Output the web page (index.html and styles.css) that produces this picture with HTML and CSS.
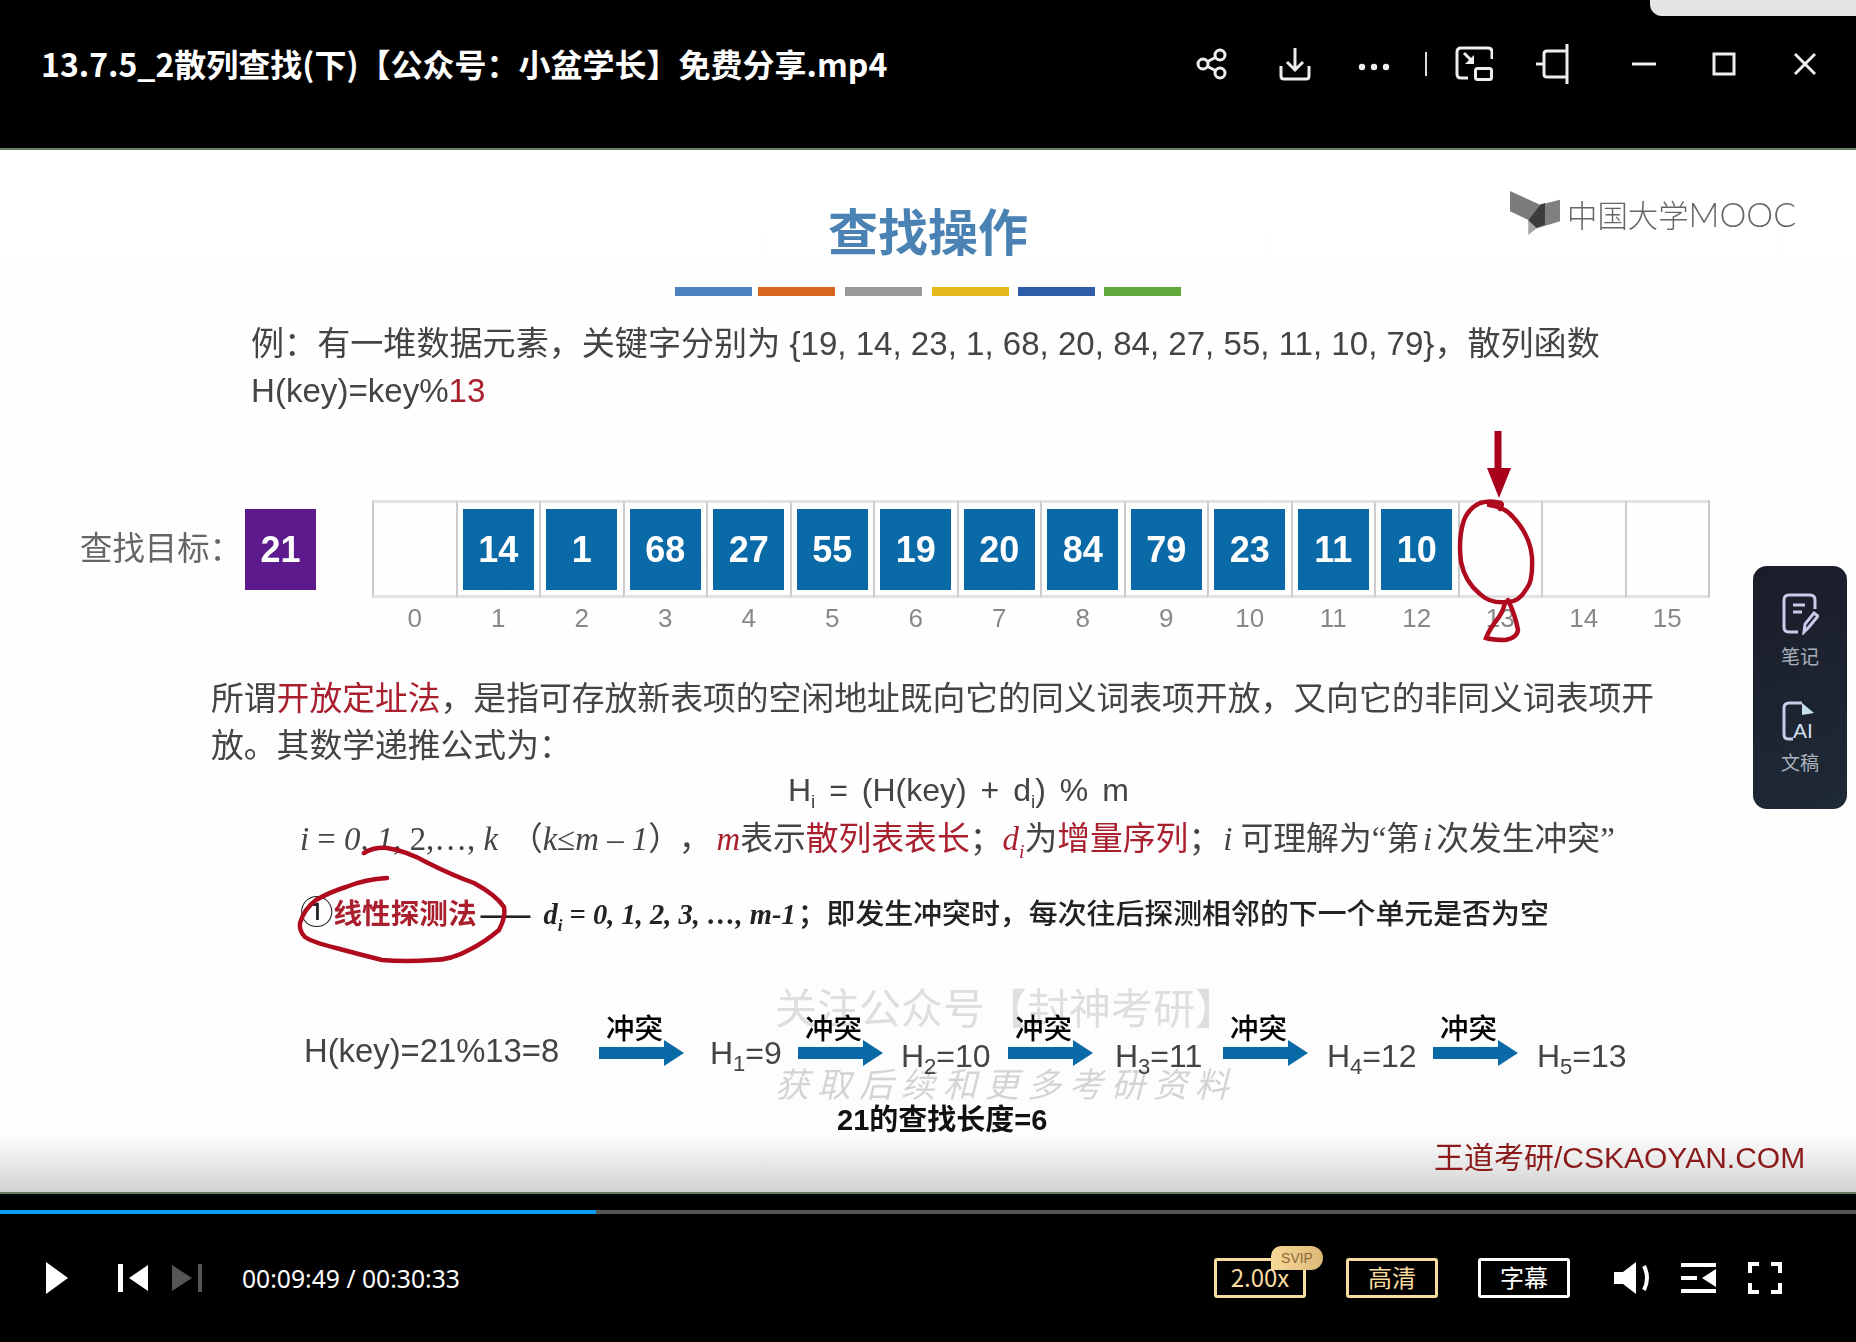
FILE: index.html
```html
<!DOCTYPE html>
<html lang="zh-CN">
<head>
    <meta charset="UTF-8">
    <meta name="viewport" content="width=device-width, initial-scale=1.0">
    <title>13.7.5_2散列查找(下)</title>
    <link rel="stylesheet" href="styles.css">
</head>
<body>
<div class="player">
    <div class="corner-tab"></div>

    <!-- Title bar -->
    <header class="topbar">
        <div class="file-title">13.7.5_2散列查找(下)【公众号：小盆学长】免费分享.mp4</div>
        <div class="window-tools">
            <svg class="tool share" viewBox="0 0 32 32"><circle cx="7" cy="16" r="5"/><circle cx="24" cy="7" r="5"/><circle cx="24" cy="25" r="5"/><path d="M11.5 13.5l8-4M11.5 18.5l8 4"/></svg>
            <svg class="tool download" viewBox="0 0 32 34"><path d="M16 1v22M8 15l8 8 8-8M2 19v10q0 3 3 3h22q3 0 3-3V19"/></svg>
            <svg class="tool dots" viewBox="0 0 32 8"><circle class="solid" cx="4" cy="4" r="3.2"/><circle class="solid" cx="16" cy="4" r="3.2"/><circle class="solid" cx="28" cy="4" r="3.2"/></svg>
            <span class="tool-sep"></span>
            <svg class="tool mini" viewBox="0 0 38 36"><path d="M13 32H6Q2 32 2 28V6Q2 2 6 2H33Q37 2 37 6v7"/><rect x="20.5" y="22.5" width="16" height="11" rx="2"/><path d="M9 7l8 8"/><path class="solid" d="M19 9v9h-9z"/></svg>
            <svg class="tool pin" viewBox="0 0 34 40"><path d="M32 0v40M32 7H12q-3 0-3 3v20q0 3 3 3h20M9 20H1"/></svg>
            <svg class="tool win-min" viewBox="0 0 24 4"><path d="M0 2h24"/></svg>
            <svg class="tool win-max" viewBox="0 0 24 24"><rect x="2" y="2" width="20" height="20"/></svg>
            <svg class="tool win-close" viewBox="0 0 24 24"><path d="M2 2l20 20M22 2L2 22"/></svg>
        </div>
    </header>

    <!-- Video frame -->
    <main class="slide">
        <div class="mooc-logo">
            <svg class="mooc-book" viewBox="0 0 52 48"><path fill="#7b7b7b" d="M0 1l30 13.700L18.300 30 0 21.300z"/><path fill="#808080" d="M30 14.700l20-5v21.600L18.300 41z"/><path fill="#3c3c3c" d="M30 14.700l5-1.700v21.700l-15 5-1.700-10z"/><path fill="#a5a5a5" d="M18.300 30v15l8.400-6.700z"/></svg>
            <span class="mooc-cn">中国大学</span><span class="mooc-en">MOOC</span>
        </div>

        <h1 class="slide-title">查找操作</h1>
        <div class="color-bars">
            <i class="bar-blue"></i><i class="bar-orange"></i><i class="bar-grey"></i><i class="bar-yellow"></i><i class="bar-navy"></i><i class="bar-green"></i>
        </div>

        <p class="example">例：有一堆数据元素，关键字分别为 {19, 14, 23, 1, 68, 20, 84, 27, 55, 11, 10, 79}，散列函数<br>H(key)=key%<span class="red">13</span></p>

        <div class="lookup">
            <div class="lookup-label">查找目标：</div>
            <div class="target">21</div>
            <div class="slots">
                <div class="col"><div class="slot"></div><div class="idx">0</div></div>
                <div class="col"><div class="slot"><b>14</b></div><div class="idx">1</div></div>
                <div class="col"><div class="slot"><b>1</b></div><div class="idx">2</div></div>
                <div class="col"><div class="slot"><b>68</b></div><div class="idx">3</div></div>
                <div class="col"><div class="slot"><b>27</b></div><div class="idx">4</div></div>
                <div class="col"><div class="slot"><b>55</b></div><div class="idx">5</div></div>
                <div class="col"><div class="slot"><b>19</b></div><div class="idx">6</div></div>
                <div class="col"><div class="slot"><b>20</b></div><div class="idx">7</div></div>
                <div class="col"><div class="slot"><b>84</b></div><div class="idx">8</div></div>
                <div class="col"><div class="slot"><b>79</b></div><div class="idx">9</div></div>
                <div class="col"><div class="slot"><b>23</b></div><div class="idx">10</div></div>
                <div class="col"><div class="slot"><b>11</b></div><div class="idx">11</div></div>
                <div class="col"><div class="slot"><b>10</b></div><div class="idx">12</div></div>
                <div class="col"><div class="slot"></div><div class="idx">13</div></div>
                <div class="col"><div class="slot"></div><div class="idx">14</div></div>
                <div class="col"><div class="slot"></div><div class="idx">15</div></div>
            </div>
        </div>

        <p class="definition">所谓<span class="red">开放定址法</span>，是指可存放新表项的空闲地址既向它的同义词表项开放，又向它的非同义词表项开<br>放。其数学递推公式为：</p>

        <div class="formula">H<sub>i</sub> = (H(key) + d<sub>i</sub>) % m</div>

        <div class="math-line"><em>i</em> = <em>0, 1,</em> 2,…, <em>k</em><span class="paren">（<em>k</em>≤<em>m</em> – <em>1</em>）</span>，<em class="red m-var">m</em>表示<span class="red">散列表表长</span>；<em class="red">d<sub>i</sub></em>为<span class="red">增量序列</span>；<em class="i-var">i</em> 可理解为“第<em class="nth">i</em>次发生冲突”</div>

        <div class="probe-line"><span class="circled">①</span><strong class="red">线性探测法</strong><span class="dash">——</span><em class="probe-math">d<sub>i</sub> = 0, 1, 2, 3, …, m-1</em><span class="probe-text">；即发生冲突时，每次往后探测相邻的下一个单元是否为空</span></div>

        <div class="chain">
            <div class="h-key">H(key)=21%13=8</div>
            <div class="hop"><span>冲突</span><svg viewBox="0 0 85 26"><path d="M0 7h65V0l20 13-20 13v-7H0z"/></svg></div>
            <div class="h-val v1">H<sub>1</sub>=9</div>
            <div class="hop"><span>冲突</span><svg viewBox="0 0 85 26"><path d="M0 7h65V0l20 13-20 13v-7H0z"/></svg></div>
            <div class="h-val v2">H<sub>2</sub>=10</div>
            <div class="hop"><span>冲突</span><svg viewBox="0 0 85 26"><path d="M0 7h65V0l20 13-20 13v-7H0z"/></svg></div>
            <div class="h-val v3">H<sub>3</sub>=11</div>
            <div class="hop"><span>冲突</span><svg viewBox="0 0 85 26"><path d="M0 7h65V0l20 13-20 13v-7H0z"/></svg></div>
            <div class="h-val v4">H<sub>4</sub>=12</div>
            <div class="hop"><span>冲突</span><svg viewBox="0 0 85 26"><path d="M0 7h65V0l20 13-20 13v-7H0z"/></svg></div>
            <div class="h-val v5">H<sub>5</sub>=13</div>
        </div>

        <div class="search-len">21的查找长度=6</div>
        <div class="site-mark">王道考研/CSKAOYAN.COM</div>

        <!-- burned-in watermark -->
        <div class="wm wm-top">关注公众号【封神考研】</div>
        <div class="wm wm-bottom">获取后续和更多考研资料</div>

        <!-- pen marks drawn over the slide, in page coordinates -->
        <svg class="ink" viewBox="0 150 1856 1042">
            <path class="arrow-shaft" d="M1498 431v40"/>
            <path class="arrow-head" d="M1487 468h24l-12 30z"/>
            <path d="M1489 505q16 2 24 12 17 18 19 40 1 24-5 31-8 14-19 14-18 2-28-8-15-12-19-32-3-24 3-42 5-12 16-17 10-3 21 0 2 2-1 6"/>
            <path d="M1508 600q7 14 10 30-1 8-13 10-12 0-19-2 4-10 13-21 5-8 6-15"/>
            <path d="M364 853q10-6 23-5 20 3 41 15 26 13 46 20 22 12 30 24 2 10-5 23-14 12-30 20-18 10-36 10-28 2-51 0-24-6-46-12-24-6-31-11-6-6-5-14 4-14 16-23 14-8 30-13 20-8 41-9"/>
        </svg>
    </main>

    <!-- Side panel -->
    <aside class="side-panel">
        <div class="side-item">
            <svg viewBox="0 0 38 44"><path d="M17 41H8Q3 41 3 36V9Q3 4 8 4H29Q34 4 34 9v9"/><path d="M12 14h12M12 21h9"/><path d="M23 41l1-8 9-11 4 3-9 11z"/></svg>
            <span>笔记</span>
        </div>
        <div class="side-item">
            <svg viewBox="0 0 38 44"><path d="M12 42H7Q3 42 3 37V11Q3 6 8 6H21"/><path class="fold" d="M21 6l12 10-12 2z"/><text x="12" y="41">AI</text></svg>
            <span>文稿</span>
        </div>
    </aside>

    <!-- Player controls -->
    <footer class="controls">
        <div class="progress"><div class="progress-fill"></div></div>
        <div class="control-row">
            <svg class="ctl play" viewBox="0 0 22 32"><path d="M0 0l22 16L0 32z"/></svg>
            <svg class="ctl prev" viewBox="0 0 30 28"><path d="M0 0h5v28H0zM30 1v26L11 14z"/></svg>
            <svg class="ctl next" viewBox="0 0 30 28"><path d="M30 0h-4v28h4zM0 1v26l20-13z"/></svg>
            <div class="time">00:09:49 / 00:30:33</div>
            <div class="control-right">
                <div class="pill gold speed">2.00x<span class="svip">SVIP</span></div>
                <div class="pill gold">高清</div>
                <div class="pill subs">字幕</div>
                <svg class="ctl volume" viewBox="0 0 38 32"><path d="M0 10h9L22 0v32L9 22H0z"/><path class="line" d="M30 4q6 12 0 24"/></svg>
                <svg class="ctl playlist" viewBox="0 0 35 30"><path d="M0 0h35v4H0zM0 26h35v4H0zM0 13h16v4H0zM35 6v18L21 15z"/></svg>
                <svg class="ctl fullscreen" viewBox="0 0 34 32"><path class="line" d="M2 11V2h9M23 2h9v9M32 21v9h-9M11 30H2v-9"/></svg>
            </div>
        </div>
    </footer>
</div>
</body>
</html>
```

FILE: styles.css
```css
/* Page */
body {
    margin: 0;
    background-color: #000;
    font-family: "Liberation Sans", "Noto Sans CJK SC", sans-serif;
}

.player {
    position: relative;
    width: 1856px;
    height: 1342px;
    overflow: hidden;
    background-color: #000;
}

.corner-tab {
    position: absolute;
    top: 0;
    right: 0;
    width: 206px;
    height: 16px;
    background-color: #e4e4e4;
    border-bottom-left-radius: 12px;
}

/* Title bar */
.topbar {
    display: flex;
    align-items: center;
    justify-content: space-between;
    height: 128px;
    padding: 0 0 20px 41px;
    box-sizing: content-box;
    border-bottom: 2px solid #64805f;
}

.file-title {
    margin-top: -3px;
    color: #fff;
    font-family: "Noto Sans CJK SC", sans-serif;
    font-size: 32px;
    font-weight: 700;
}

.window-tools {
    display: flex;
    align-items: center;
}

.tool {
    fill: none;
    stroke: #eee;
    stroke-width: 3;
}

.tool .solid {
    fill: #eee;
    stroke: none;
}

.tool.share { width: 32px; height: 32px; margin-right: 51px; }
.tool.download { width: 32px; height: 34px; margin-right: 47px; }
.tool.dots { width: 32px; height: 8px; margin: 6px 0 0; }
.tool-sep { width: 2px; height: 24px; margin: 0 28px 0 35px; background-color: #ddd; }
.tool.mini { width: 38px; height: 36px; margin-right: 42px; }
.tool.pin { width: 34px; height: 40px; margin-right: 63px; }
.tool.win-min { width: 24px; height: 4px; margin-right: 56px; }
.tool.win-max { width: 24px; height: 24px; margin-right: 57px; }
.tool.win-close { width: 24px; height: 24px; margin-right: 39px; }

/* Video frame */
.slide {
    position: relative;
    height: 1042px;
    overflow: hidden;
    color: #444;
    background: linear-gradient(to bottom, #fff 0, #fdfdfd 985px, #d2d2d2 1042px);
    filter: blur(0.5px);
}

.red { color: #a91f2e; }

.mooc-logo {
    position: absolute;
    top: 40px;
    left: 1510px;
    display: flex;
    align-items: center;
    color: #666;
}

.mooc-book { width: 52px; height: 48px; margin-right: 5px; }

.mooc-cn {
    font-family: "Noto Sans CJK SC", sans-serif;
    font-size: 30.4px;
    font-weight: 300;
    line-height: 44px;
}

.mooc-en {
    font-family: Lato, sans-serif;
    font-size: 34px;
    font-weight: 300;
    line-height: 44px;
}

.slide-title {
    margin: 0;
    padding-top: 46px;
    text-align: center;
    color: #4a82b4;
    font-family: "Noto Sans CJK SC", sans-serif;
    font-size: 50px;
    line-height: 66px;
    font-weight: 700;
}

.color-bars {
    display: flex;
    margin: 25px 0 0 675px;
}

.color-bars i {
    display: block;
    width: 77px;
    height: 9px;
    margin-right: 9px;
}

.color-bars .bar-blue { margin-right: 6px; }
.color-bars .bar-orange, .color-bars .bar-grey { margin-right: 10px; }

.bar-blue { background-color: #4a82bd; }
.bar-orange { background-color: #d9661f; }
.bar-grey { background-color: #999; }
.bar-yellow { background-color: #e6b81e; }
.bar-navy { background-color: #2f5ca8; }
.bar-green { background-color: #5fa83a; }

.example {
    margin: 24px 0 0 251px;
    font-size: 33.1px;
    line-height: 47px;
}

/* Lookup row */
.lookup {
    display: flex;
    align-items: flex-start;
    margin: 86px 0 0 80px;
}

.lookup-label {
    width: 165px;
    color: #666;
    font-size: 32.4px;
    line-height: 98px;
    white-space: nowrap;
}

.target {
    width: 71px;
    height: 81px;
    margin: 9px 56px 0 0;
    color: #fff;
    background-color: #5c1a8c;
    font-size: 36px;
    font-weight: 700;
    line-height: 81px;
    text-align: center;
}

.slots {
    display: grid;
    grid-template-columns: repeat(16, 83.5px);
    border-right: 2px solid #ccc;
    height: 98px;
}

.slot {
    display: flex;
    align-items: center;
    justify-content: center;
    height: 98px;
    box-sizing: border-box;
    border: 3px solid #e2e2e2;
    border-width: 3px 0;
    border-left: 2px solid #ccc;
}

.slot b {
    display: block;
    width: 71px;
    height: 81px;
    color: #fff;
    background-color: #0a6aa8;
    font-size: 36px;
    line-height: 81px;
    text-align: center;
}

.idx {
    margin-top: 4px;
    padding-left: 2px;
    color: #888;
    font-size: 26px;
    line-height: 32px;
    text-align: center;
}

/* Text block */
.definition {
    margin: 77px 0 0 211px;
    font-size: 32.8px;
    line-height: 47px;
}

.formula {
    margin: -2px 0 0 788px;
    font-size: 32px;
    line-height: 46px;
    word-spacing: 5px;
}

sub {
    font-size: 60%;
    line-height: 0;
}

.math-line {
    margin: 3px 0 0 300px;
    font-family: "Liberation Serif", "Noto Sans CJK SC", serif;
    font-size: 32.8px;
    line-height: 47px;
    white-space: nowrap;
}

.paren { margin: 0 14px 0 12px; }
.m-var { margin-left: 5px; }
.i-var { margin-left: 2px; }
.nth { margin: 0 4px; }

.probe-line {
    margin: 26px 0 0 300px;
    color: #222;
    font-size: 29px;
    line-height: 44px;
    white-space: nowrap;
}

.circled { font-size: 33.5px; line-height: 30px; }
.probe-line .red { font-weight: 700; font-size: 28.6px; }
.dash { margin: 0 15px 0 4px; letter-spacing: -2px; font-size: 26px; font-weight: 700; }

.probe-math {
    font-family: "Liberation Serif", serif;
    font-weight: 700;
    font-size: 28.5px;
}

.probe-text {
    margin-left: 2px;
    font-family: "Noto Sans CJK SC", sans-serif;
    font-weight: 500;
    font-size: 28.9px;
}

/* Collision chain */
.chain {
    display: flex;
    align-items: flex-start;
    height: 94px;
    margin: 52px 0 0 304px;
    color: #444;
    font-size: 32px;
    white-space: nowrap;
}

.h-key { width: 295px; margin-top: 40px; font-size: 32.8px; line-height: 44px; }

.hop {
    display: flex;
    flex-direction: column;
    align-items: center;
    width: 85px;
    padding-top: 25px;
}

.hop span {
    margin-right: 14px;
    color: #000;
    font-size: 28.5px;
    font-weight: 500;
    line-height: 30px;
}

.hop svg { width: 85px; height: 26px; margin-top: -4px; fill: #0a6aa8; }

.h-val { margin-top: 45px; line-height: 44px; }
.h-val sub { font-size: 22px; }
.v1 { width: 88px; margin-left: 26px; margin-top: 42px; }
.v2 { width: 107px; margin-left: 18px; }
.v3 { width: 108px; margin-left: 22px; }
.v4 { width: 106px; margin-left: 19px; }
.v5 { margin-left: 19px; }

.search-len {
    margin: 17px 0 0 837px;
    color: #111;
    font-size: 29px;
    font-weight: 700;
    line-height: 40px;
}

.site-mark {
    margin: -1px 0 0 1434px;
    color: #8b1a1a;
    font-size: 30px;
    line-height: 38px;
}

.wm {
    position: absolute;
    white-space: nowrap;
    color: #e0e0e0;
    font-family: "Noto Sans CJK SC", sans-serif;
    mix-blend-mode: multiply;
}

.wm-top { top: 828px; left: 775px; font-size: 42px; line-height: 56px; }
.wm-bottom { top: 911px; left: 775px; color: #d6d6d6; font-size: 34px; font-style: italic; line-height: 44px; letter-spacing: 8px; }

.ink {
    position: absolute;
    top: 0;
    left: 0;
    width: 1856px;
    height: 1042px;
    fill: none;
    stroke: #b00a1e;
    stroke-width: 4.5;
    stroke-linecap: round;
}

.ink .arrow-shaft { stroke: #a8001c; stroke-width: 7; stroke-linecap: butt; }
.ink .arrow-head { fill: #a8001c; stroke: none; }

/* Side panel */
.side-panel {
    position: absolute;
    top: 566px;
    left: 1753px;
    display: flex;
    flex-direction: column;
    align-items: center;
    gap: 27px;
    width: 94px;
    height: 243px;
    box-sizing: border-box;
    padding-top: 25px;
    border-radius: 14px;
    background: linear-gradient(160deg, #1b1c2a, #1e2a36);
}

.side-item {
    display: flex;
    flex-direction: column;
    align-items: center;
    gap: 7px;
    color: #aab0bc;
    font-family: "Noto Sans CJK SC", sans-serif;
    font-size: 19px;
    line-height: 28px;
}

.side-item svg {
    width: 38px;
    height: 44px;
    fill: none;
    stroke: #c9cbe8;
    stroke-width: 3;
}

.side-item .fold { fill: #c5e0ea; stroke: none; }

.side-item text {
    fill: #d5dff0;
    stroke: none;
    font-family: "Liberation Sans", sans-serif;
    font-size: 21px;
}

/* Player controls */
.controls {
    border-top: 2px solid #6a7a60;
    padding-top: 16px;
}

.progress {
    height: 4px;
    background-color: #555;
}

.progress-fill {
    width: 596px;
    height: 4px;
    background-color: #0a9cf0;
}

.control-row {
    display: flex;
    align-items: center;
    height: 128px;
    padding-left: 46px;
}

.ctl { fill: #fff; }
.ctl .line { fill: none; stroke: #fff; stroke-width: 4; }

.play { width: 22px; height: 32px; margin-right: 50px; }
.prev { width: 30px; height: 28px; margin-right: 24px; }
.next { width: 30px; height: 28px; margin-right: 40px; fill: #555; }

.time {
    color: #fff;
    font-family: "Noto Sans", sans-serif;
    font-size: 24.7px;
}

.control-right {
    display: flex;
    align-items: center;
    margin-left: auto;
    padding-right: 74px;
}

.pill {
    position: relative;
    width: 92px;
    height: 40px;
    box-sizing: border-box;
    margin-right: 40px;
    border: 3px solid #fff;
    border-radius: 3px;
    color: #fff;
    font-family: "Noto Sans CJK SC", sans-serif;
    font-size: 24px;
    line-height: 31px;
    text-align: center;
}

.pill.subs { margin-right: 44px; }

.pill.gold {
    border-color: #fbdc9f;
    color: #fbdc9f;
}

.svip {
    position: absolute;
    top: -15px;
    right: -20px;
    width: 52px;
    height: 24px;
    border-radius: 10px 12px 12px 0;
    background: linear-gradient(to right, #f8d998, #dcb877);
    color: #8a6a3a;
    font-family: "Liberation Sans", sans-serif;
    font-size: 14px;
    line-height: 24px;
}

.volume { width: 38px; height: 32px; margin-right: 29px; }
.playlist { width: 35px; height: 30px; margin-right: 32px; }
.fullscreen { width: 34px; height: 32px; }
```
